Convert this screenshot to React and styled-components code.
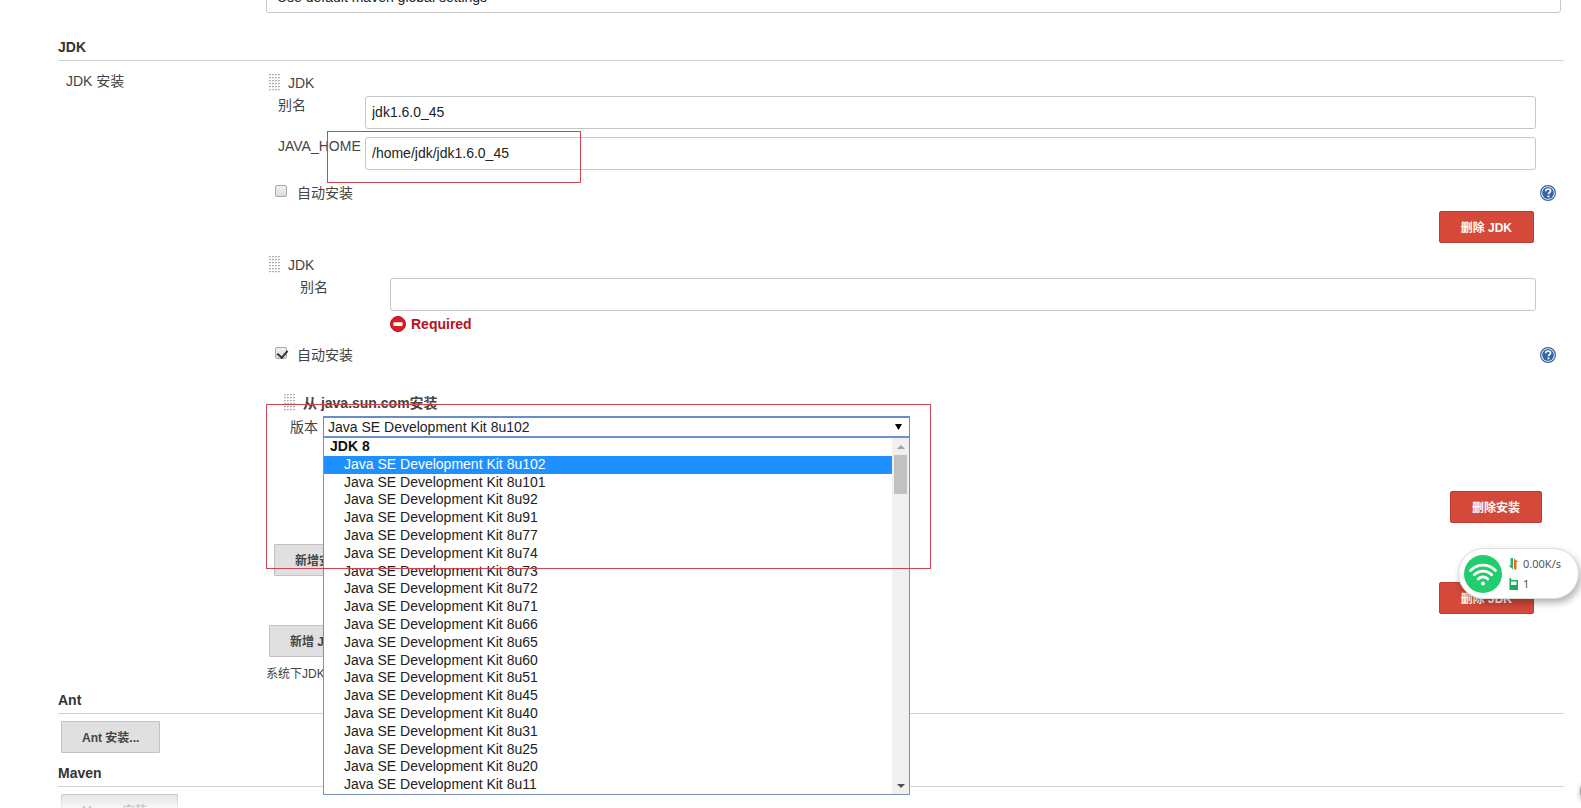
import React from 'react'
import styled, { css, createGlobalStyle } from 'styled-components'

const GlobalStyle = createGlobalStyle`
  * {
    box-sizing: border-box;
  }

  body {
    margin: 0;
    background: #fff;
    overflow: hidden;
  }

  body, button, input, select {
    font-family: "Liberation Sans", Arial, "Noto Sans CJK SC", sans-serif;
    font-size: 14px;
  }
`

const Screen = styled.div`
  position: relative;
  height: 100vh;
  overflow: hidden;
  color: #444;
  line-height: 20px;
`

// the form is scrolled a little past the maven settings select
const Page = styled.form`
  margin-top: -20px;
  padding: 0 17px 0 58px;
`

const SettingsRow = styled.div`
  display: grid;
  grid-template-columns: 208px 1fr;
`

const control = css`
  display: block;
  width: 100%;
  height: 33px;
  border: 1px solid #c4c6c8;
  border-radius: 3px;
  background: #fff;
  color: #222;
`

const TextInput = styled.input`
  ${control}
  padding: 0 6px 2px;
`

const SettingsSelect = styled.select`
  ${control}
  appearance: none;
  grid-column: 2;
  width: calc(100% - 3px);
  padding: 0 10px;
`

const SectionTitle = styled.h2`
  margin: 0;
  padding-bottom: 5px;
  border-bottom: 1px solid #d0d2d3;
  color: #333;
  font-size: 14px;
  line-height: 16px;
`

const Section = styled.section`
  margin-top: ${props => props.$gap}px;
`

const SectionButtons = styled.div`
  padding: 7px 3px 0;
`

const RowLabel = styled.div`
  padding: 10px 8px;
`

const Chunk = styled.div`
  padding-top: 11px;
`

const SubChunk = styled.div`
  padding-top: 19px;
`

const ChunkTitle = styled.div`
  display: flex;
  align-items: center;
  gap: 8px;
  height: 20px;
  padding: 2px 0 0 ${props => props.$indent}px;
  font-weight: ${props => props.$bold ? 'bold' : 'normal'};
`

const Field = styled.div`
  display: grid;
  grid-template-columns: ${props => props.$label}px 1fr;
  padding: 4px 28px 4px 0;
`

const FieldLabel = styled.label`
  padding-left: ${props => props.$indent}px;
  line-height: 18px;
  white-space: nowrap;
`

const ErrorText = styled.div`
  display: flex;
  align-items: center;
  gap: 5px;
  margin-top: 5px;
  color: #b5121b;
  font-weight: bold;
  line-height: 16px;
`

const CheckRow = styled.div`
  display: flex;
  align-items: center;
  justify-content: space-between;
  height: 37px;
  padding: 0 8px 0 9px;
`

const CheckLabel = styled.label`
  display: flex;
  align-items: center;
  gap: 10px;
`

const Checkbox = styled.input`
  appearance: none;
  width: 12px;
  height: 12px;
  margin: 0 0 3px;
  border: 1px solid #aaa;
  border-radius: 2px;
  background: linear-gradient(#f0f0f0, #dcdcdc);

  &:checked::after {
    content: "";
    display: block;
    width: 5px;
    height: 8px;
    margin: 0 0 0 3px;
    border: solid #333;
    border-width: 0 2px 2px 0;
    transform: rotate(40deg);
  }
`

const HelpButton = styled.button`
  display: flex;
  padding: 0;
  border: 0;
  background: none;
`

const Button = styled.button`
  height: 32px;
  padding: 0 20px 2px;
  border: 1px solid #c2c2c2;
  border-radius: 1px;
  background: #e0e0e0;
  color: #444;
  font-size: 12px;
  font-weight: bold;
  white-space: nowrap;
`

const DangerButton = styled(Button)`
  padding: 0 21px 2px;
  border-color: #bb4033;
  border-radius: 2px;
  background: #d4493a;
  color: #fff;
`

const DeleteRow = styled.div`
  display: flex;
  justify-content: flex-end;
  padding-right: ${props => props.$right}px;
`

const AddRow = styled.div`
  display: flex;
  padding-left: ${props => props.$indent}px;
`

const InstallerButtons = styled.div`
  padding: 21px 0 6px;
`

const VersionRow = styled.div`
  display: grid;
  grid-template-columns: 57px 587px;
  align-items: center;
  padding: 4px 0 53px;
`

const VersionLabel = styled.label`
  padding-left: 24px;
`

const VersionBox = styled.div`
  position: relative;
`

const VersionSelect = styled.select`
  display: block;
  appearance: none;
  width: 100%;
  height: 22px;
  padding: 0 4px;
  border: 2px solid #6a8cc8;
  border-right-width: 1px;
  border-left-width: 1px;
  background: #fff;
  color: #222;
`

const SelectArrow = styled.svg`
  position: absolute;
  top: 7px;
  right: 8px;
`

const Popup = styled.div`
  position: absolute;
  z-index: 1;
  top: 21px;
  left: 0;
  display: grid;
  grid-template-columns: 1fr 17px;
  width: 100%;
  height: 358px;
  border: 1px solid #7b93b8;
  background: #fff;
`

const Options = styled.ul`
  display: grid;
  grid-auto-rows: 1fr;
  margin: 0;
  padding: 0;
  list-style: none;
  color: #222;
  line-height: 17px;
`

const OptionGroup = styled.li`
  padding-left: 6px;
  color: #111;
  font-weight: bold;
`

const Option = styled.li`
  padding-left: 20px;
  background: ${props => props.$selected ? '#1e90ff' : 'none'};
  color: ${props => props.$selected ? '#fff' : 'inherit'};
`

const ScrollBar = styled.div`
  display: flex;
  flex-direction: column;
  align-items: center;
  background: #f0f0f0;
`

const ScrollThumb = styled.div`
  width: 13px;
  height: 39px;
  margin-bottom: auto;
  background: #c1c1c1;
`

const Note = styled.div`
  margin-top: 9px;
  font-size: 12px;
  line-height: 16px;
`

const Mark = styled.div`
  position: absolute;
  z-index: 2;
  top: ${props => props.$top}px;
  left: ${props => props.$left}px;
  width: ${props => props.$width}px;
  height: ${props => props.$height}px;
  border: 1px solid #d2434d;
  pointer-events: none;
`

const BottomFade = styled.div`
  position: absolute;
  bottom: 0;
  left: 0;
  width: 100%;
  height: 14px;
  background: linear-gradient(rgba(255, 255, 255, .1), rgba(255, 255, 255, .8));
  pointer-events: none;
`

const NetWidget = styled.aside`
  position: absolute;
  z-index: 3;
  top: 548px;
  right: 2px;
  display: flex;
  align-items: center;
  gap: 6px;
  width: 121px;
  height: 51px;
  padding-left: 5px;
  border: 1px solid #ddd;
  border-radius: 26px;
  background: #fff;
  box-shadow: 2px 4px 7px rgba(0, 0, 0, .3);
`

const NetStats = styled.div`
  display: grid;
  gap: 4px;
  color: #555;
  font-family: "Noto Sans", sans-serif;
  font-size: 11px;
  line-height: 16px;
`

const NetStat = styled.div`
  display: flex;
  align-items: center;
  gap: 4px;
`

const EdgeDot = styled.div`
  position: absolute;
  right: -23px;
  bottom: 5px;
  width: 24px;
  height: 24px;
  border-radius: 12px;
  background: #999;
  box-shadow: 0 2px 5px rgba(0, 0, 0, .3);
`

const DragHandle = () =>
  <svg width="11" height="18" aria-hidden="true">
    <defs>
      <pattern id="grip" width="3" height="3" patternUnits="userSpaceOnUse">
        <rect width="2" height="1" fill="#b0b0b0" />
        <rect y="1" width="1" height="1" fill="#d9d9d9" />
      </pattern>
    </defs>
    <rect width="11" height="18" fill="url(#grip)" />
  </svg>

const HelpIcon = () =>
  <svg width="16" height="16" viewBox="0 0 16 16">
    <circle cx="8" cy="8" r="7.4" fill="#fff" stroke="#3465a4" strokeWidth="1.2" />
    <circle cx="8" cy="8" r="5.9" fill="#3465a4" />
    <path d="M5.7 6.2C5.8 4.7 6.8 4 8.1 4c1.4 0 2.4.8 2.4 2 0 1.6-2 1.8-2 3.3" fill="none" stroke="#fff" strokeWidth="1.7" />
    <rect x="7.5" y="10.5" width="1.9" height="1.8" fill="#fff" />
  </svg>

const ErrorIcon = () =>
  <svg width="16" height="16" viewBox="0 0 16 16" aria-hidden="true">
    <circle cx="8" cy="8" r="7.5" fill="#d81f26" stroke="#b5121b" />
    <rect x="3.5" y="6.3" width="9" height="3.6" rx=".5" fill="#fff" />
  </svg>

const Triangle = ({ up }) =>
  <svg width="16" height="17" viewBox="0 0 16 17" aria-hidden="true">
    {up
      ? <path d="M4 11 8 7l4 4z" fill="#a3a3a3" />
      : <path d="M4 7h8l-4 4z" fill="#505050" />}
  </svg>

const WifiIcon = () =>
  <svg width="38" height="38" viewBox="0 0 38 38" aria-hidden="true">
    <circle cx="19" cy="19" r="19" fill="#22cd6e" />
    <g fill="none" stroke="#fff" strokeWidth="2.8" strokeLinecap="round">
      <path d="M6.5 15.5c7-7.3 18-7.3 25 0" />
      <path d="M10.3 19.8c5-5 12.4-5 17.4 0" />
      <path d="M14.2 24c2.9-2.7 6.7-2.7 9.6 0" />
    </g>
    <circle cx="19" cy="28.5" r="1.9" fill="#fff" />
  </svg>

const TrafficIcon = () =>
  <svg width="11" height="12" viewBox="0 0 11 12" aria-hidden="true">
    <path d="M2.5 0H5v11.5L.5 7.5h2z" fill="#22b573" />
    <path d="M6 .5 10.500 4H8.500v7.500H6z" fill="#f26a21" />
  </svg>

const DeviceIcon = () =>
  <svg width="11" height="12" viewBox="0 0 11 12" aria-hidden="true">
    <path d="M1.500 0h1.700v2H10v10H1.500z" fill="#1fa85f" />
    <rect x="3" y="3.500" width="5.500" height="3.500" fill="#fff" />
  </svg>

const AutoInstall = ({ id, checked }) =>
  <CheckRow>
    <CheckLabel htmlFor={id}>
      <Checkbox type="checkbox" id={id} defaultChecked={checked} />
      自动安装
    </CheckLabel>
    <HelpButton type="button" aria-label="帮助"><HelpIcon /></HelpButton>
  </CheckRow>

const updates = [102, 101, 92, 91, 77, 74, 73, 72, 71, 66, 65, 60, 51, 45, 40, 31, 25, 20, 11]

const versions = updates.map(update => `Java SE Development Kit 8u${update}`)

const VersionPicker = () =>
  <VersionRow>
    <VersionLabel htmlFor="version">版本</VersionLabel>
    <VersionBox>
      <VersionSelect id="version" defaultValue={versions[0]}>
        <optgroup label="JDK 8">
          {versions.map(version => <option key={version}>{version}</option>)}
        </optgroup>
      </VersionSelect>
      <SelectArrow width="7" height="7" aria-hidden="true">
        <path d="M0 1h7L3.500 7z" fill="#000" />
      </SelectArrow>
      <Popup>
        <Options role="listbox" aria-label="版本">
          <OptionGroup role="presentation">JDK 8</OptionGroup>
          {versions.map((version, i) =>
            <Option key={version} role="option" aria-selected={i === 0} $selected={i === 0}>
              {version}
            </Option>
          )}
        </Options>
        <ScrollBar>
          <Triangle up />
          <ScrollThumb />
          <Triangle />
        </ScrollBar>
      </Popup>
    </VersionBox>
  </VersionRow>

export default () =>
  <Screen>
    <GlobalStyle />
    <Page>
      <SettingsRow>
        <SettingsSelect aria-label="Global settings">
          <option>Use default maven global settings</option>
        </SettingsSelect>
      </SettingsRow>

      <Section $gap={26}>
        <SectionTitle>JDK</SectionTitle>
        <SettingsRow>
          <RowLabel>JDK 安装</RowLabel>
          <div>
            <Chunk>
              <ChunkTitle $indent={3}><DragHandle />JDK</ChunkTitle>
              <Field $label={99}>
                <FieldLabel htmlFor="name1" $indent={12}>别名</FieldLabel>
                <TextInput id="name1" defaultValue="jdk1.6.0_45" />
              </Field>
              <Field $label={99}>
                <FieldLabel htmlFor="home1" $indent={12}>JAVA_HOME</FieldLabel>
                <TextInput id="home1" defaultValue="/home/jdk/jdk1.6.0_45" />
              </Field>
              <AutoInstall id="auto1" />
              <DeleteRow $right={30}>
                <DangerButton type="button">删除 JDK</DangerButton>
              </DeleteRow>
            </Chunk>

            <Chunk>
              <ChunkTitle $indent={3}><DragHandle />JDK</ChunkTitle>
              <Field $label={124}>
                <FieldLabel htmlFor="name2" $indent={34}>别名</FieldLabel>
                <div>
                  <TextInput id="name2" />
                  <ErrorText><ErrorIcon />Required</ErrorText>
                </div>
              </Field>
              <AutoInstall id="auto2" checked />
              <SubChunk>
                <ChunkTitle $indent={18} $bold><DragHandle />从 java.sun.com安装</ChunkTitle>
                <VersionPicker />
                <DeleteRow $right={22}>
                  <DangerButton type="button">删除安装</DangerButton>
                </DeleteRow>
              </SubChunk>
              <InstallerButtons>
                <AddRow $indent={8}>
                  <Button type="button">新增安装</Button>
                </AddRow>
              </InstallerButtons>
              <DeleteRow $right={30}>
                <DangerButton type="button">删除 JDK</DangerButton>
              </DeleteRow>
            </Chunk>

            <Chunk>
              <AddRow $indent={3}>
                <Button type="button">新增 JDK</Button>
              </AddRow>
            </Chunk>
            <Note>系统下JDK</Note>
          </div>
        </SettingsRow>
      </Section>

      <Section $gap={10}>
        <SectionTitle>Ant</SectionTitle>
        <SectionButtons>
          <Button type="button">Ant 安装...</Button>
        </SectionButtons>
      </Section>

      <Section $gap={12}>
        <SectionTitle>Maven</SectionTitle>
        <SectionButtons>
          <Button type="button">Maven 安装...</Button>
        </SectionButtons>
      </Section>
    </Page>

    <Mark $top={131} $left={327} $width={254} $height={52} />
    <Mark $top={404} $left={266} $width={665} $height={165} />
    <BottomFade />
    <NetWidget>
      <WifiIcon />
      <NetStats>
        <NetStat><TrafficIcon />0.00K/s</NetStat>
        <NetStat><DeviceIcon />1</NetStat>
      </NetStats>
    </NetWidget>
    <EdgeDot />
  </Screen>
